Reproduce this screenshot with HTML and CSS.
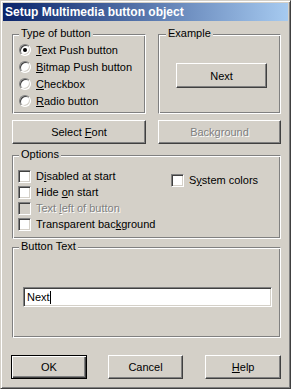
FILE: index.html
```html
<!DOCTYPE html>
<html>
	<head>
		<meta charset="utf-8">
		<title>Setup Multimedia button object</title>
		<link rel="stylesheet" href="styles.css">
	</head>
	<body>
		<div class="window">
			<div class="titlebar">Setup Multimedia button object</div>
			<div class="client">
				<div class="row-top">
					<div class="group group-type">
						<div class="legend">Type of button</div>
						<div class="opt-list">
							<div class="opt"><span class="radio checked"></span><span><u>T</u>ext Push button</span></div>
							<div class="opt"><span class="radio"></span><span><u>B</u>itmap Push button</span></div>
							<div class="opt"><span class="radio"></span><span><u>C</u>heckbox</span></div>
							<div class="opt"><span class="radio"></span><span><u>R</u>adio button</span></div>
						</div>
					</div>
					<div class="group group-example">
						<div class="legend">Example</div>
						<div class="btn btn-example"><span>Next</span></div>
					</div>
				</div>
				<div class="row-buttons">
					<div class="btn"><span>Select <u>F</u>ont</span></div>
					<div class="btn disabled"><span>Back<u>g</u>round</span></div>
				</div>
				<div class="group group-options">
					<div class="legend">Options</div>
					<div class="options-grid">
						<div class="opt-col">
							<div class="chk-row"><span class="check"></span><span>D<u>i</u>sabled at start</span></div>
							<div class="chk-row"><span class="check"></span><span>Hide <u>o</u>n start</span></div>
							<div class="chk-row disabled"><span class="check"></span><span>Text <u>l</u>eft of button</span></div>
							<div class="chk-row"><span class="check"></span><span>Transparent bac<u>k</u>ground</span></div>
						</div>
						<div class="opt-col opt-col-right">
							<div class="chk-row"><span class="check"></span><span>S<u>y</u>stem colors</span></div>
						</div>
					</div>
				</div>
				<div class="group group-text">
					<div class="legend">Button Text</div>
					<div class="edit"><span>Next</span><span class="caret"></span></div>
				</div>
				<div class="row-dialog">
					<div class="btn default btn-ok"><span>OK</span></div>
					<div class="btn btn-cancel"><span>Cancel</span></div>
					<div class="btn btn-help"><span><u>H</u>elp</span></div>
				</div>
			</div>
		</div>
	</body>
</html>
```

FILE: styles.css
```css
body{
	margin:0;
	background:#d4d0c8;
}

.window{
	width:291px;
	height:389px;
	box-sizing:border-box;
	border:1px solid;
	border-color:#d4d0c8 #404040 #404040 #d4d0c8;
	box-shadow:inset 1px 1px #fff, inset -1px -1px #808080;
	padding:2px;
	background:#d4d0c8;
	font-family:"Liberation Sans", Arial, sans-serif;
	font-size:11px;
	color:#000;
}

.titlebar{
	height:18px;
	line-height:18px;
	padding-left:2px;
	background:linear-gradient(to right, #0a246a, #a6caf0);
	color:#fff;
	font-weight:bold;
	font-size:12px;
	white-space:nowrap;
}

.client{
	padding:13px 7px 0 9px;
}

u{
	text-underline-offset:1px;
}

/* group boxes */
.group{
	box-sizing:border-box;
	border:1px solid;
	border-color:#808080 #fff #fff #808080;
	box-shadow:inset 1px 1px #fff, inset -1px -1px #808080;
}

.legend{
	width:fit-content;
	height:13px;
	line-height:13px;
	margin:-8px 0 0 6px;
	padding:0 2px;
	background:#d4d0c8;
	white-space:nowrap;
}

.row-top{
	display:grid;
	grid-template-columns:134px 123px;
	column-gap:12px;
}

.group-type, .group-example{
	height:80px;
}

.group-example .legend{
	margin-left:7px;
}

.opt-list{
	margin-top:1px;
}

.opt{
	height:17px;
	display:flex;
	align-items:center;
	padding-left:6px;
	white-space:nowrap;
}

.radio{
	width:12px;
	height:12px;
	box-sizing:border-box;
	border-radius:50%;
	border:1px solid;
	border-color:#808080 #fff #fff #808080;
	box-shadow:inset 1px 1px #404040, inset -1px -1px #d4d0c8;
	background:#fff;
	margin-right:5px;
	position:relative;
	flex:none;
}

.radio.checked::after{
	content:"";
	position:absolute;
	left:3px;
	top:3px;
	width:4px;
	height:4px;
	border-radius:50%;
	background:#000;
}

/* push buttons */
.btn{
	box-sizing:border-box;
	border:1px solid;
	border-color:#fff #404040 #404040 #fff;
	box-shadow:inset -1px -1px #808080;
	display:flex;
	align-items:center;
	justify-content:center;
	white-space:nowrap;
}

.btn.disabled, .chk-row.disabled{
	color:#808080;
	text-shadow:1px 1px #fff;
}

.btn.default{
	border:1px solid #000;
	box-shadow:inset 1px 1px #fff, inset -1px -1px #404040, inset -2px -2px #808080;
}

.btn-example{
	width:91px;
	height:25px;
	margin:23px 0 0 17px;
}

.row-buttons{
	display:grid;
	grid-template-columns:134px 123px;
	column-gap:12px;
	margin-top:6px;
	height:24px;
}

/* options */
.group-options{
	margin-top:11px;
	height:84px;
}

.options-grid{
	display:grid;
	grid-template-columns:153px 1fr;
	padding-left:5px;
	margin-top:7px;
}

.opt-col-right{
	padding-top:4px;
}

.chk-row{
	height:16px;
	display:flex;
	align-items:center;
	white-space:nowrap;
}

.check{
	width:13px;
	height:13px;
	box-sizing:border-box;
	border:1px solid;
	border-color:#808080 #fff #fff #808080;
	box-shadow:inset 1px 1px #404040, inset -1px -1px #d4d0c8;
	background:#fff;
	margin-right:5px;
	flex:none;
}

.chk-row.disabled .check{
	background:#d4d0c8;
}

/* button text */
.group-text{
	margin-top:8px;
	height:91px;
}

.edit{
	width:249px;
	height:20px;
	box-sizing:border-box;
	margin:34px 0 0 10px;
	padding-left:3px;
	border:1px solid;
	border-color:#808080 #fff #fff #808080;
	box-shadow:inset 1px 1px #404040, inset -1px -1px #d4d0c8;
	background:#fff;
	display:flex;
	align-items:center;
}

.caret{
	width:1px;
	height:13px;
	background:#000;
}

/* dialog buttons */
.row-dialog{
	display:flex;
	margin:17px 0 0 -1px;
	height:24px;
}

.row-dialog .btn{
	width:76px;
}

.btn-cancel{
	margin-left:21px;
}

.btn-help{
	margin-left:22px;
}
```
